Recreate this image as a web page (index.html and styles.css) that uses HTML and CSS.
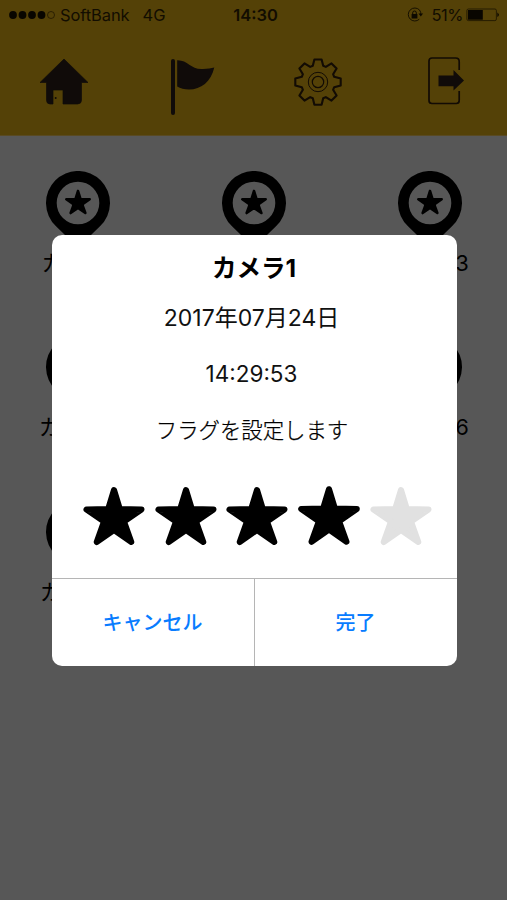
FILE: index.html
```html
<!DOCTYPE html>
<html lang="ja">
<head>
<meta charset="utf-8">
<title>カメラ</title>
<link rel="stylesheet" href="styles.css">
</head>
<body>
<svg class="defs" aria-hidden="true">
  <symbol id="star" viewBox="-31 -31 62 62">
    <path d="M0-27 5.8-8 27.5-7.5 10 4.6 17.3 25 0 13-17.3 25-10 4.6-27.5-7.5-5.8-8Z" fill="currentColor" stroke="currentColor" stroke-width="6" stroke-linejoin="round"/>
  </symbol>
  <symbol id="pin" viewBox="-32 -32 64 76">
    <path d="M-22 23.200A32 32 0 1 1 22 23.200L14 31 3 43H-3L-14 31ZM-21.300 0A21.300 21.300 0 1 0 21.300 0 21.300 21.300 0 1 0-21.300 0Z" fill="currentColor" fill-rule="evenodd"/>
    <use href="#star" x="-13.2" y="-13.8" width="26.4" height="26.4"/>
  </symbol>
</svg>
<header class="top">
  <div class="status">
    <div class="carrier">
      <svg class="signal" width="48" height="10" viewBox="0 0 48 10"><g fill="#090600"><circle cx="4" cy="5" r="3.9"/><circle cx="13.5" cy="5" r="3.9"/><circle cx="23" cy="5" r="3.9"/><circle cx="32.5" cy="5" r="3.9"/></g><circle cx="42" cy="5" r="3.5" fill="none" stroke="#211700" stroke-width=".8"/></svg>
      <span class="name">SoftBank</span><span>4G</span>
    </div>
    <strong class="clock">14:30</strong>
    <div class="power">
      <svg class="lock" width="17" height="16" viewBox="0 0 17 16"><path d="M12.5 3A6.5 6.5 0 1 0 12.3 12.2M13.8 7.8A6.5 6.5 0 0 0 12.5 3" fill="none" stroke="#161000" stroke-width="1"/><path d="M11.5 6.6h4.6l-2.3 3zM4.6 7h5.8v4.4H4.6z" fill="#0d0900"/><path d="M5.7 7V5.8a1.8 1.8 0 0 1 3.6 0V7" fill="none" stroke="#0d0900" stroke-width="1"/></svg>
      <span class="percent">51%</span>
      <svg width="34" height="14" viewBox="0 0 34 14"><rect x=".9" y="1" width="29.5" height="11.6" rx="1.5" fill="none" stroke="#1b1300" stroke-width=".8"/><path d="M2 2h14.8v9.7H2z" fill="#090600"/><path d="M31.400 4.500q3 2.300 0 4.600z" fill="#090600"/></svg>
    </div>
  </div>
  <nav class="nav">
    <svg width="50" height="60" viewBox="0 0 50 60"><path d="M25 7 49 30.5H42.5V48q0 4-4 4H24V38H14v14h-3q-3.500 0-3.500-4V30.500H1Z" fill="#100b09" stroke="#100b09" stroke-linejoin="round" stroke-width=".7"/><circle cx="16.700" cy="46" r="1" fill="#100b09"/></svg>
    <svg width="50" height="60" viewBox="0 0 50 60"><path d="M5 9V61" stroke="#100b09" stroke-width="4" stroke-linecap="round"/><path d="M9.200 8.300C20 8 23 18 35 17q7-.5 11.300-1.500C43 30 33 37.500 21 37.500q-7 0-11.800-3Z" fill="#100b09"/></svg>
    <svg width="50" height="60" viewBox="-25 -30 50 60"><g fill="none" stroke="#120b04"><path d="M-3.600-22.500H3.600L5.200-16.200 7.800-15.100 13.500-18.600 18.600-13.500 15.100-7.800 16.200-5.200 22.700-3.600V3.600L16.200 5.200 15.100 7.800 18.600 13.500 13.500 18.600 7.800 15.100 5.200 16.200 3.600 22.700H-3.600L-5.200 16.200-7.800 15.100-13.500 18.600-18.600 13.500-15.100 7.800-16.200 5.200-22.700 3.600V-3.600L-16.200-5.200-15.100-7.800-18.600-13.500-13.500-18.600-7.800-15.100-5.200-16.200Z" stroke-width="2.100" stroke-linejoin="round"/><circle r="9.700" stroke-width="1"/><circle r="5.700" stroke-width="1.200"/></g></svg>
    <svg width="50" height="60" viewBox="0 0 50 60"><path d="M38.200 18V9.500q0-3.500-3.500-3.500H11Q8 6 8 9V48.500q0 3 3 3H35.200q3 0 3-3V39" fill="none" stroke="#120b04" stroke-width="1.700"/><path d="M17.500 23.500H32.500V18L43 28.500 32.500 38.500V34.200H17.500Z" fill="#100b09"/></svg>
  </nav>
</header>
<main class="cameras">
  <div class="camera"><svg class="pin"><use href="#pin"/></svg><span>カメラ1</span></div>
  <div class="camera"><svg class="pin"><use href="#pin"/></svg></div>
  <div class="camera"><svg class="pin"><use href="#pin"/></svg><span>カメラ3</span></div>
  <div class="camera"><svg class="pin"><use href="#pin"/></svg><span>カメラ4</span></div>
  <div class="camera"><svg class="pin"><use href="#pin"/></svg></div>
  <div class="camera"><svg class="pin"><use href="#pin"/></svg><span>カメラ6</span></div>
  <div class="camera"><svg class="pin"><use href="#pin"/></svg><span>カメラ7</span></div>
</main>
<section class="dialog" role="dialog">
  <div class="content">
    <h1>カメラ1</h1>
    <p class="date">2017年07月24日</p>
    <p class="time">14:29:53</p>
    <p class="message">フラグを設定します</p>
    <div class="stars">
      <svg><use href="#star"/></svg><svg><use href="#star"/></svg><svg><use href="#star"/></svg><svg class="current"><use href="#star"/></svg><svg class="off"><use href="#star"/></svg>
    </div>
  </div>
  <div class="actions"><button>キャンセル</button><button>完了</button></div>
</section>
</body>
</html>
```
FILE: styles.css
```css
* { box-sizing: border-box; }
body {
  margin: 0;
  height: 900px;
  overflow: hidden;
  background: #575757;
  color: #000;
  font-family: Inter, "Noto Sans CJK JP", sans-serif;
}
.defs { position: absolute; width: 0; height: 0; }
.top { height: 135.5px; background: #544107; border-bottom: 1px solid #594a23; }
.status {
  height: 30px;
  padding: 0 7px 0 9px;
  display: grid;
  grid-template-columns: 1fr auto 1fr;
  align-items: center;
  font-size: 16.5px;
  color: #120d01;
}
.carrier, .power { display: flex; align-items: center; }
.signal { margin-right: 3px; }
.name { margin-right: 13px; letter-spacing: -.1px; }
.clock { font-weight: 600; font-size: 16.5px; padding-left: 2px; }
.power { justify-content: flex-end; }
.lock { margin-right: 8px; }
.percent { margin-right: 3px; letter-spacing: -.5px; }
.nav {
  display: grid;
  grid-template-columns: repeat(4, 50px);
  column-gap: 77.300px;
  padding: 22px 0 0 39px;
}
.nav svg { overflow: visible; }
.nav svg:nth-child(2) { margin-left: 1.5px; }
.nav svg:nth-child(3) { margin-left: -1px; }
.cameras {
  display: grid;
  grid-template-columns: repeat(3, 92px);
  grid-auto-rows: 164.5px;
  justify-content: space-between;
  padding: 35px 31px 0 32px;
}
.camera {
  display: flex;
  flex-direction: column;
  align-items: center;
  font-size: 21.5px;
  line-height: 33px;
  white-space: nowrap;
}
.pin { width: 64px; height: 76px; }
.dialog {
  position: absolute;
  left: 51.5px;
  top: 235px;
  width: 405px;
  height: 431px;
  border-radius: 10px;
  background: #fff;
  overflow: hidden;
  display: flex;
  flex-direction: column;
}
.content { flex: 1; text-align: center; }
h1, p { margin: 0; line-height: 34px; }
h1 { margin-top: 16px; font-size: 24.5px; font-weight: 700; }
p { font-size: 22.5px; color: #111; }
.date { margin-top: 16px; padding-right: 5px; font-size: 23px; }
.time { margin-top: 22px; padding-right: 5px; }
.message { margin-top: 22px; padding-right: 4px; font-size: 21.4px; font-weight: 300; color: #000; -webkit-text-stroke: .25px #000; }
.stars { display: flex; justify-content: space-between; padding: 0 25px 0 31.500px; margin-top: 39px; }
.stars svg { width: 62px; height: 62px; }
.stars .current { transform: translateY(-.5px) scale(1.01); }
.stars .off { color: #e1e1e1; }
.actions { height: 88.500px; display: flex; border-top: 1px solid #b5b5b5; }
button {
  flex: 1;
  border: 0;
  padding: 0 0 2px;
  background: none;
  color: #087cff;
  font: 500 20px Inter, "Noto Sans CJK JP", sans-serif;
}
button + button { border-left: 1px solid #b5b5b5; }
```
